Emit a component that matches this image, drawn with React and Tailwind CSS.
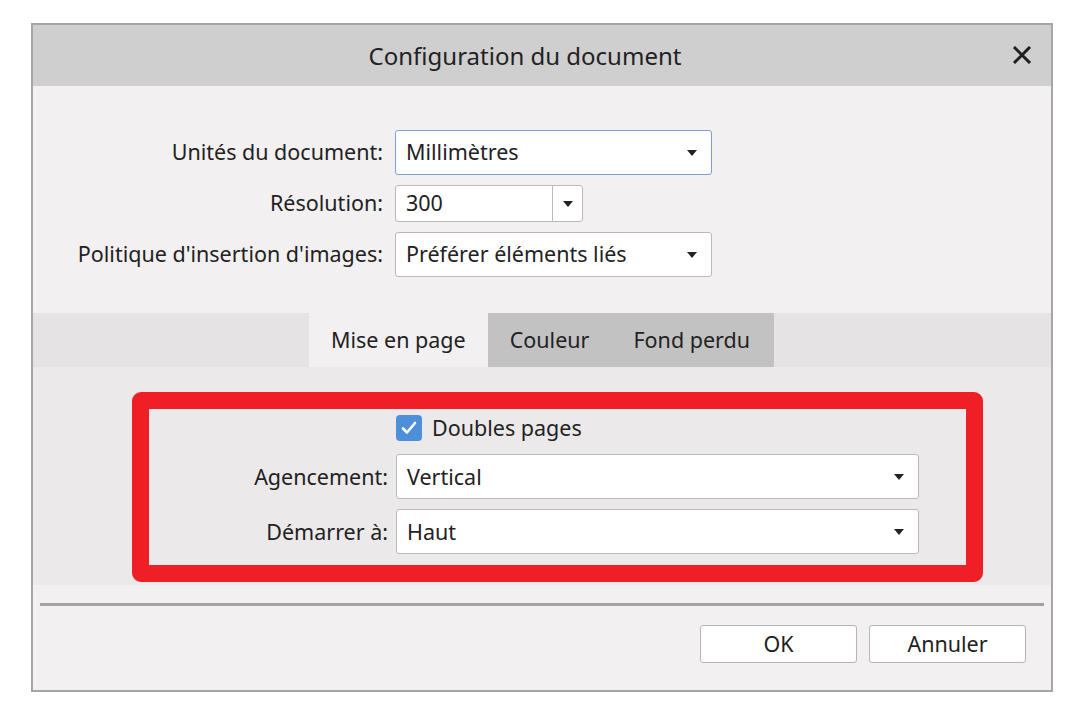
import React from 'react';

const font = { fontFamily: '"Noto Sans", "Open Sans", Arial, sans-serif' };

function Arrow() {
  return (
    <svg width="10" height="6" viewBox="0 0 10 6" className="shrink-0">
      <path d="M0 0 H10 L5 6 Z" fill="#222" />
    </svg>
  );
}

function Select({ value, width, focused }) {
  return (
    <div
      className={`flex h-[45px] items-center justify-between rounded-[3px] border bg-white pl-[10px] pr-[14px] text-[21.5px] text-[#222] ${
        focused ? 'border-[#7f9fd9]' : 'border-[#b9b9b9]'
      } ${width}`}
    >
      <span>{value}</span>
      <Arrow />
    </div>
  );
}

function Label({ children }) {
  return <div className="whitespace-nowrap text-right text-[21.5px] text-[#222]">{children}</div>;
}

export default function App() {
  return (
    <div className="min-h-screen bg-white pl-[31px] pt-[23px]" style={font}>
      <div className="flex h-[669px] w-[1022px] flex-col border-2 border-[#a6a6a6] bg-[#f2f0f1]">
        {/* title bar */}
        <div className="relative flex h-[61px] shrink-0 items-center justify-center bg-[#d0cfd0] pr-[34px]">
          <span className="text-[24px] text-[#222]">Configuration du document</span>
          <svg
            className="absolute right-[19px] top-[21px]"
            width="20"
            height="18"
            viewBox="0 0 20 18"
          >
            <path d="M2 1 L18 17 M18 1 L2 17" stroke="#1f1f1f" strokeWidth="3" />
          </svg>
        </div>

        {/* document fields */}
        <div className="grid grid-cols-[350px_auto] items-center gap-x-[12px] gap-y-[10px] pt-[44px] pb-[36px]">
          <Label>Unités du document:</Label>
          <Select value="Millimètres" width="w-[317px]" focused />
          <Label>Résolution:</Label>
          <div className="flex h-[37px] w-[188px] items-stretch rounded-[3px] border border-[#b9b9b9] bg-white text-[21.5px] text-[#222]">
            <div className="flex flex-1 items-center pl-[10px]">300</div>
            <div className="flex w-[30px] items-center justify-center border-l border-[#b9b9b9]">
              <Arrow />
            </div>
          </div>
          <Label>Politique d'insertion d'images:</Label>
          <Select value="Préférer éléments liés" width="w-[317px]" />
        </div>

        {/* tabs */}
        <div className="flex h-[54px] shrink-0 bg-[#e5e3e4] pl-[276px] text-[21.5px] text-[#222]">
          <div className="flex items-center bg-[#f2f0f1] px-[22px]">Mise en page</div>
          <div className="flex items-center bg-[#c3c2c3] px-[22px]">Couleur</div>
          <div className="flex items-center bg-[#c3c2c3] pl-[22px] pr-[24px]">Fond perdu</div>
        </div>

        {/* tab content */}
        <div className="h-[218px] shrink-0 bg-[#ebe9ea] pl-[99px] pt-[25px]">
          <div className="h-[190px] w-[851px] rounded-[9px] border-[17px] border-[#ee1f25]">
            <div className="grid grid-cols-[239px_auto] items-center gap-x-[8px] pt-[3px]">
              <div />
              <div className="flex items-center gap-[10px] text-[21.5px] text-[#222]">
                <div className="flex h-[26px] w-[26px] items-center justify-center rounded-[4px] bg-[#4d8fd8]">
                  <svg width="16" height="14" viewBox="0 0 16 14">
                    <path
                      d="M2 7.5 L6 11.5 L14 2"
                      stroke="white"
                      strokeWidth="2.6"
                      fill="none"
                      strokeLinecap="round"
                      strokeLinejoin="round"
                    />
                  </svg>
                </div>
                <span>Doubles pages</span>
              </div>
              <div className="h-[10px]" />
              <div className="h-[10px]" />
              <Label>Agencement:</Label>
              <Select value="Vertical" width="w-[523px]" />
              <div className="h-[10px]" />
              <div className="h-[10px]" />
              <Label>Démarrer à:</Label>
              <Select value="Haut" width="w-[523px]" />
            </div>
          </div>
        </div>

        {/* separator */}
        <div className="mx-[7px] mt-[18px] h-[3px] bg-[#a3a3a3]" />

        {/* buttons */}
        <div className="flex justify-end gap-[12px] pr-[25px] pt-[19px]">
          <button className="h-[38px] w-[157px] rounded-[3px] border border-[#b5b5b5] bg-white text-[21.5px] text-[#222]">
            OK
          </button>
          <button className="h-[38px] w-[157px] rounded-[3px] border border-[#b5b5b5] bg-white text-[21.5px] text-[#222]">
            Annuler
          </button>
        </div>
      </div>
    </div>
  );
}
